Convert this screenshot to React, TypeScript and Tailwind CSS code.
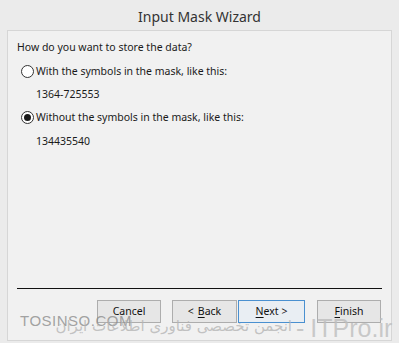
import React from "react";

function Radio({ checked }: { checked?: boolean }) {
  return (
    <span className="flex h-[13px] w-[13px] items-center justify-center rounded-full border border-[#333] bg-white">
      {checked && <span className="h-[7px] w-[7px] rounded-full bg-[#1a1a1a]" />}
    </span>
  );
}

function Button({ children, focused, className }: { children: React.ReactNode; focused?: boolean; className?: string }) {
  return (
    <button
      className={
        "flex h-[23px] items-center justify-center border bg-[#e6e6e6] text-[10.5px] text-[#111] " +
        (focused ? "border-[#4a90d0] bg-[#e9eef3] " : "border-[#adadad] ") +
        (className ?? "")
      }
    >
      {children}
    </button>
  );
}

export default function App() {
  return (
    <div
      className="relative h-[343px] w-[399px] overflow-hidden bg-[#ebebeb] text-[#1a1a1a]"
      style={{ fontFamily: '"Noto Sans", "Open Sans", sans-serif' }}
    >
      <div className="flex h-[30px] items-center justify-center pt-[2px] text-[14px] text-[#333]">
        Input Mask Wizard
      </div>

      <div className="ml-[7px] flex h-[311px] w-[385px] flex-col border border-[#d6d6d6] bg-[#f1f1f1]">
        <div className="flex flex-col pl-[9px] pt-[7px] text-[10.5px]">
          <div className="leading-[18px]">How do you want to store the data?</div>
          <label className="mt-[6px] flex items-center gap-[2px] pl-[4px] leading-[18px]">
            <Radio />
            <span>With the symbols in the mask, like this:</span>
          </label>
          <div className="mt-[5px] pl-[19px] leading-[18px]">1364-725553</div>
          <label className="mt-[5px] flex items-center gap-[2px] pl-[4px] leading-[18px]">
            <Radio checked />
            <span>Without the symbols in the mask, like this:</span>
          </label>
          <div className="mt-[6px] pl-[19px] leading-[18px]">134435540</div>
        </div>

        <div className="mt-auto mb-[17px] flex flex-col">
          <div className="mx-[9px] h-px bg-[#111]" />
          <div className="mt-[11px] flex pl-[89px]">
            <Button className="w-[64px]">Cancel</Button>
            <Button className="ml-[11px] w-[65px]">
              &lt; <span className="ml-1 underline underline-offset-2">B</span>ack
            </Button>
            <Button focused className="ml-px w-[67px]">
              <span className="underline underline-offset-2">N</span>ext &gt;
            </Button>
            <Button className="ml-[12px] w-[64px]">
              <span className="underline underline-offset-2">F</span>inish
            </Button>
          </div>
        </div>
      </div>

      {/* watermark */}
      <div
        className="pointer-events-none absolute left-[20px] top-[310px] text-[15px] tracking-[0.5px] text-[#8c8c8c]/80"
        style={{ fontFamily: '"Liberation Sans", sans-serif' }}
      >
        TOSINSO.COM
      </div>
      <div
        className="pointer-events-none absolute left-[10px] top-[316px] w-[282px] text-right text-[15px] leading-[20px] text-[#b5b5b5]/80"
        style={{ fontFamily: '"DejaVu Sans", sans-serif' }}
        dir="rtl"
      >
        انجمن تخصصی فناوری اطلاعات ایران
      </div>
      <div
        className="pointer-events-none absolute left-[296px] top-[314px] flex items-baseline gap-[6px] text-[25px] leading-[28px] text-[#bdbdbd]/80"
        style={{ fontFamily: '"Liberation Sans", sans-serif' }}
      >
        <span>-</span>
        <span>ITPro.ir</span>
      </div>
    </div>
  );
}
